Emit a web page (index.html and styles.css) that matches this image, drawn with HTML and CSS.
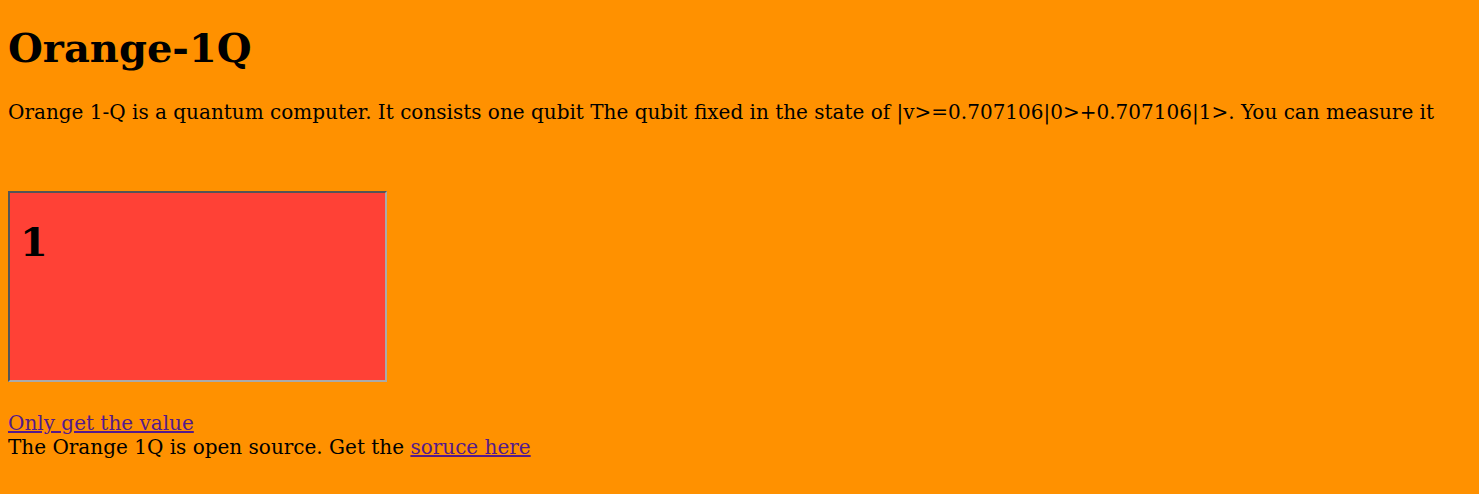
FILE: index.html
```html
<!DOCTYPE html>
<html>
<head>
<meta charset="utf-8">
<link rel="stylesheet" href="styles.css">
</head>
<body class="page">
<h1 class="title">Orange-1Q</h1>
<p class="intro">Orange 1-Q is a quantum computer. It consists one qubit The qubit fixed in the state of |v&gt;=0.707106|0&gt;+0.707106|1&gt;. You can measure it</p>
<div class="measure-wrap">
  <div class="measure-box"><h1 class="measure-value">1</h1></div>
</div>
<div class="links">
  <a class="link" href="#">Only get the value</a><br>
  The Orange 1Q is open source. Get the <a class="link" href="#">soruce here</a>
</div>
</body>
</html>
```
FILE: styles.css
```css
html { background: #ff9100; }
.page {
  margin: 8px;
  background: #ff9100;
  color: #000;
  font-family: "DejaVu Serif", serif;
  font-size: 20px;
}
.title { font-size: 2em; margin: 16px 0 29px; }
.intro { margin: 20px 0; }
.measure-wrap { padding-top: 47px; }
.measure-box {
  width: 355px;
  height: 187px;
  border: 2px solid;
  border-color: #555 #aaa #aaa #555;
  background: #ff4136;
  padding: 0 10px;
  box-sizing: content-box;
  overflow: hidden;
}
.measure-value { font-size: 2em; margin: 25px 0 20px; }
.links { margin-top: 29px; }
.link { color: #551a8b; }
```
